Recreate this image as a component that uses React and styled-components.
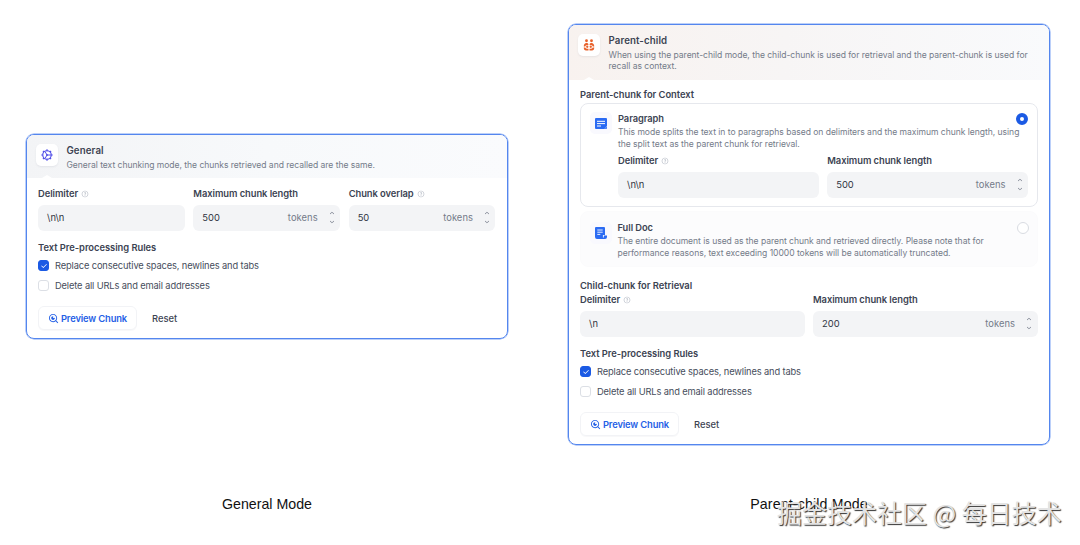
import React from 'react'
import styled, { createGlobalStyle } from 'styled-components'
import { RiSearchEyeLine, RiQuestionLine, RiArrowUpSLine, RiArrowDownSLine, RiCheckLine } from 'react-icons/ri'

const GlobalStyle = createGlobalStyle`
* {
  box-sizing: border-box;
  margin: 0;
  padding: 0;
}
body {
  background: #fff;
  font-family: Inter, "Liberation Sans", sans-serif;
  color: #3c4352;
  overflow: hidden;
}
`

const Page = styled.main`
position: relative;
width: 1080px;
height: 545px;
padding: 24px 30px 0 26px;
display: flex;
justify-content: space-between;
`

const Column = styled.section`
width: 482px;
height: 490px;
display: flex;
flex-direction: column;
justify-content: space-between;
padding-top: ${props => props.$top || 0}px;
`

const Card = styled.div`
height: ${props => props.$height}px;
border: 1px solid #5486ee;
box-shadow: 0 0 0 0.5px #7ba2f3;
border-radius: 8px;
overflow: hidden;
`

const Header = styled.header`
position: relative;
display: flex;
gap: 9px;
height: ${props => props.$height}px;
padding: 8.5px 10px 0 8.5px;
background: ${props => props.$warm
    ? 'linear-gradient(92deg, #f8f2ef 0%, #f7f5f5 45%, #f9fafc 100%)'
    : 'linear-gradient(92deg, #f3f4f6 0%, #f7f9fb 50%, #fafbfd 100%)'};

h3 {
  font-size: 9.7px;
  letter-spacing: 0.1px;
}

p {
  margin-top: 2px;
}

&:after {
  content: '';
  position: absolute;
  left: 15px;
  bottom: 0;
  border: 5px solid transparent;
  border-top: 0;
  border-bottom: 3px solid #fff;
}
`

const IconBox = styled.div`
flex: none;
width: 22px;
height: 22px;
display: flex;
align-items: center;
justify-content: center;
border-radius: 5px;
background: ${props => props.$soft ? '#f9f9fe' : '#fff'};
box-shadow: ${props => props.$soft ? 'none' : '0 1px 2px rgba(40, 50, 80, 0.08)'};
`

const Title = styled.h3`
font-size: 9.3px;
line-height: 14px;
font-weight: 600;
letter-spacing: -0.05px;
`

const Text = styled.p`
margin-top: 1px;
font-size: 8.55px;
line-height: 11.5px;
letter-spacing: -0.03px;
color: #747b89;
white-space: pre-line;
`

const Body = styled.div`
padding: ${props => props.$top}px 11.5px 0 11px;
`

const SectionTitle = styled.h4`
font-size: 9.4px;
line-height: 14px;
font-weight: 600;
letter-spacing: -0.04px;
`

const Fields = styled.div`
display: grid;
grid-template-columns: repeat(${props => props.$cols}, 1fr);
gap: 8.5px;
`

const Label = styled.label`
display: flex;
align-items: center;
gap: 3px;
height: 14px;
margin-bottom: 4.5px;
font-size: 9.4px;
font-weight: 600;
letter-spacing: -0.06px;
white-space: nowrap;

svg {
  color: #b9bec8;
}
`

const Input = styled.div`
height: 25.5px;
display: flex;
align-items: center;
padding: 0 4.5px 0 9px;
border-radius: 6px;
background: #f3f4f6;
font-size: 9.4px;
color: #2f3542;
`

const Unit = styled.span`
margin-left: auto;
margin-right: 10px;
letter-spacing: 0.05px;
color: #747b89;
`

const Spinner = styled.span`
display: flex;
flex-direction: column;
justify-content: space-between;
height: 17px;
color: #747b89;
`

const Options = styled.div`
display: flex;
flex-direction: column;
gap: 4px;
margin-top: 1px;
`

const Option = styled.div`
display: flex;
gap: 6px;
height: ${props => props.$height}px;
padding: ${props => props.$active ? '8px 8.5px 0 9px' : '9px 8px 0 8.5px'};
border-radius: 8px;
border: 1px solid ${props => props.$active ? '#e6e8ed' : '#fbfbfc'};
background: ${props => props.$active ? '#fff' : '#fcfcfd'};

${IconBox} {
  margin-top: ${props => props.$active ? 0 : 1}px;
}
`

const OptionMain = styled.div`
flex: 1;
`

const OptionHead = styled.div`
display: flex;
justify-content: space-between;
align-items: center;
`

const Radio = styled.span`
width: 12px;
height: 12px;
border-radius: 50%;
background: #fff;
border: ${props => props.$checked ? '4px solid #1b5ae4' : '1px solid #d9dce2'};
`

const Rules = styled.div`
display: flex;
flex-direction: column;
gap: 6px;
margin-top: 4px;
`

const Rule = styled.div`
display: flex;
align-items: center;
gap: 6px;
height: 14px;
font-size: 9.3px;
letter-spacing: -0.13px;
color: #464d5b;
`

const Checkbox = styled.span`
width: 11px;
height: 11px;
display: flex;
align-items: center;
justify-content: center;
border-radius: 3px;
color: #fff;
background: ${props => props.$checked ? '#1b5ae4' : '#fff'};
border: 1px solid ${props => props.$checked ? '#1b5ae4' : '#dcdfe5'};
`

const Actions = styled.div`
display: flex;
align-items: center;
gap: 15px;
margin-top: 13.5px;
font-size: 9.4px;
font-weight: 500;
`

const PreviewButton = styled.button`
width: 99px;
height: 24px;
display: flex;
align-items: center;
justify-content: center;
gap: 2px;
border: 1px solid #f2f3f6;
border-radius: 6px;
background: #fff;
box-shadow: 0 1px 1px rgba(30, 40, 70, 0.03);
color: #2460e6;
font: inherit;
font-weight: 600;
letter-spacing: -0.14px;
white-space: nowrap;
`

const Caption = styled.p`
font-family: "Liberation Sans", Arial, sans-serif;
font-size: 14.2px;
line-height: 20px;
letter-spacing: ${props => props.$spacing || 0}px;
text-align: center;
color: #111;
`

const Watermark = styled.div`
position: absolute;
left: 777px;
top: 494px;
font-family: "Noto Sans CJK SC", sans-serif;
font-size: 25px;
line-height: 36px;
white-space: nowrap;
color: #e3e3e3;
text-shadow: 1px 1px 1px #333;
`

const GearIcon = () => (
  <svg width="12" height="12" viewBox="0 0 24 24" fill="none" stroke="#5350e8" strokeWidth="2.4">
    <circle cx="12" cy="12" r="8.5" />
    <path d="M12 .5v4M12 19.500v4M.5 12h3M20.500 12h3M3.800 3.800l2.500 2.500M17.700 17.700l2.500 2.500M3.800 20.200l2.500-2.500M17.700 6.300l2.500-2.500" />
    <path d="M8 5l4 7-4 7M12 12h8" strokeWidth="2" />
    <circle cx="12" cy="12" r="1.8" fill="#5350e8" stroke="none" />
  </svg>
)

const FamilyIcon = () => (
  <svg width="12" height="12" viewBox="0 0 24 24" fill="#e8622c">
    <circle cx="7" cy="3.5" r="2.8" />
    <circle cx="17" cy="3.5" r="2.8" />
    <path d="M1.500 15c0-4.500 2-7 5.500-7 2.500 0 4 1.300 4 3.500l-2 .5c-2.500 0-4 1-4.500 3zM22.500 15c0-4.500-2-7-5.500-7-2.500 0-4 1.300-4 3.500l2 .5c2.500 0 4 1 4.500 3z" />
    <circle cx="8.500" cy="15.500" r="2.300" />
    <circle cx="15.500" cy="15.500" r="2.300" />
    <path d="M1.500 17h3c.5 1.800 2 2.500 6.500 2.500V23H6c-3 0-4.500-2.500-4.500-6zM22.500 17h-3c-.5 1.800-2 2.500-6.500 2.500V23h5c3 0 4.500-2.500 4.500-6z" />
  </svg>
)

const ParagraphIcon = () => (
  <svg width="12" height="11" viewBox="0 0 12 11">
    <path fill="#2b6bf3" d="M1 0h10a1 1 0 0 1 1 1v7l-2.500 3H1a1 1 0 0 1-1-1V1a1 1 0 0 1 1-1z" />
    <path fill="#2b6bf3" d="M12 8.500V10a1 1 0 0 1-1 1h-1.300z" />
    <path stroke="#fff" d="M2 3.300h8M2 5.600h8M2 8h4" />
  </svg>
)

const DocIcon = () => (
  <svg width="12" height="12" viewBox="0 0 12 12">
    <path fill="#2b6bf3" d="M1 0h8a1 1 0 0 1 1 1v7H8v4H2a2 2 0 0 1-2-2V1a1 1 0 0 1 1-1z" />
    <path fill="#2b6bf3" d="M7.500 8.600H12v1.400a2 2 0 0 1-2 2H7.500z" />
    <path stroke="#fff" strokeWidth=".9" d="M2.300 3h5.400M2.300 5.200h5.400M2.300 7.400h3M8.400 8v2.500" />
  </svg>
)

const Field = ({ label, value, unit, help }) => (
  <div>
    <Label>
      {label}
      {help && <RiQuestionLine size={8} />}
    </Label>
    <Input>
      {value}
      {unit && <Unit>tokens</Unit>}
      {unit && (
        <Spinner>
          <RiArrowUpSLine size={8} />
          <RiArrowDownSLine size={8} />
        </Spinner>
      )}
    </Input>
  </div>
)

const Processing = () => (
  <>
    <SectionTitle>Text Pre-processing Rules</SectionTitle>
    <Rules>
      <Rule>
        <Checkbox $checked><RiCheckLine size={8} /></Checkbox>
        Replace consecutive spaces, newlines and tabs
      </Rule>
      <Rule>
        <Checkbox />
        Delete all URLs and email addresses
      </Rule>
    </Rules>
    <Actions>
      <PreviewButton>
        <RiSearchEyeLine size={11} />
        Preview Chunk
      </PreviewButton>
      <span>Reset</span>
    </Actions>
  </>
)

const Group = styled.div`
margin-top: ${props => props.$top}px;
`

const App = () => {
  return (
    <>
      <GlobalStyle />
      <Page>
        <Column $top={110}>
          <Card $height={205}>
            <Header $height={43}>
              <IconBox><GearIcon /></IconBox>
              <div>
                <Title>General</Title>
                <Text>General text chunking mode, the chunks retrieved and recalled are the same.</Text>
              </div>
            </Header>
            <Body $top={8.5}>
              <Fields $cols={3}>
                <Field label="Delimiter" value={'\\n\\n'} help />
                <Field label="Maximum chunk length" value="500" unit />
                <Field label="Chunk overlap" value="50" unit help />
              </Fields>
              <Group $top={10.2}>
                <Processing />
              </Group>
            </Body>
          </Card>
          <Caption>General Mode</Caption>
        </Column>

        <Column>
          <Card $height={421}>
            <Header $height={55} $warm>
              <IconBox><FamilyIcon /></IconBox>
              <div>
                <Title>Parent-child</Title>
                <Text>{'When using the parent-child mode, the child-chunk is used for retrieval and the parent-chunk is used for\nrecall as context.'}</Text>
              </div>
            </Header>
            <Body $top={8}>
              <SectionTitle>Parent-chunk for Context</SectionTitle>
              <Options>
                <Option $height={104} $active>
                  <IconBox $soft><ParagraphIcon /></IconBox>
                  <OptionMain>
                    <OptionHead>
                      <Title>Paragraph</Title>
                      <Radio $checked />
                    </OptionHead>
                    <Text>{'This mode splits the text in to paragraphs based on delimiters and the maximum chunk length, using\nthe split text as the parent chunk for retrieval.'}</Text>
                    <Group $top={3.5}>
                      <Fields $cols={2}>
                        <Field label="Delimiter" value={'\\n\\n'} help />
                        <Field label="Maximum chunk length" value="500" unit />
                      </Fields>
                    </Group>
                  </OptionMain>
                </Option>
                <Option $height={56}>
                  <IconBox $soft><DocIcon /></IconBox>
                  <OptionMain>
                    <OptionHead>
                      <Title>Full Doc</Title>
                      <Radio />
                    </OptionHead>
                    <Text>{'The entire document is used as the parent chunk and retrieved directly. Please note that for\nperformance reasons, text exceeding 10000 tokens will be automatically truncated.'}</Text>
                  </OptionMain>
                </Option>
              </Options>
              <Group $top={11.5}>
                <SectionTitle>Child-chunk for Retrieval</SectionTitle>
                <Fields $cols={2}>
                  <Field label="Delimiter" value={'\\n'} help />
                  <Field label="Maximum chunk length" value="200" unit />
                </Fields>
              </Group>
              <Group $top={10.2}>
                <Processing />
              </Group>
            </Body>
          </Card>
          <Caption $spacing={0.15}>Parent-child Mode</Caption>
        </Column>
        <Watermark>掘金技术社区 @ 每日技术</Watermark>
      </Page>
    </>
  )
}

export default App
